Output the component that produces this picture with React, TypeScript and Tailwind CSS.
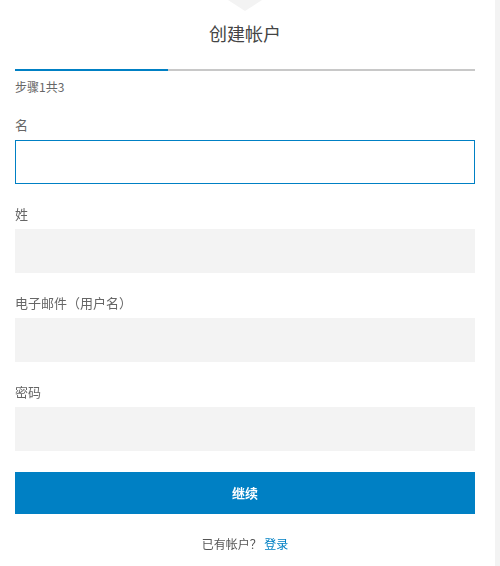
// 创建帐户 — 注册第一步
import { useState } from "react";

const fields = [
  { key: "first", label: "名", type: "text" },
  { key: "last", label: "姓", type: "text" },
  { key: "email", label: "电子邮件（用户名）", type: "email" },
  { key: "password", label: "密码", type: "password" },
];

export default function App() {
  const [focused, setFocused] = useState("first");

  return (
    <div
      className="flex min-h-[566px] w-[500px] bg-white"
      style={{ fontFamily: '"Noto Sans CJK SC", "Noto Sans", sans-serif' }}
    >
      <div className="w-[495px] pl-[15px] pr-[20px]">
        {/* 顶部小三角 */}
        <div className="flex justify-center">
          <div className="h-0 w-0 border-x-[17px] border-t-[11px] border-x-transparent border-t-[#f3f3f3]" />
        </div>

        <h1 className="mt-[10px] text-center text-[18px] leading-[24px] text-[#444]">创建帐户</h1>

        <div className="mt-[24px] flex h-[2px]">
          <div className="w-1/3 bg-[#0080c4]" />
          <div className="flex-1 bg-[#c8c8c8]" />
        </div>
        <p className="mt-[7px] text-[12px] leading-[18px] text-[#666]">步骤1共3</p>

        <div className="mt-[19px]">
          {fields.map((f, i) => (
            <div key={f.key} className={i > 0 ? "mt-[20px]" : ""}>
              <label className="block text-[13px] leading-[20px] text-[#666]">{f.label}</label>
              <input
                type={f.type}
                autoFocus={f.key === "first"}
                onFocus={() => setFocused(f.key)}
                className={`mt-[5px] block h-[44px] w-full px-3 text-[14px] outline-none ${
                  focused === f.key
                    ? "border border-[#0080c4] bg-white"
                    : "border border-transparent bg-[#f3f3f3]"
                }`}
              />
            </div>
          ))}
        </div>

        <button className="mt-[21px] flex h-[42px] w-full items-center justify-center bg-[#0080c4] text-[13px] font-bold text-white">
          继续
        </button>

        <p className="mt-[21px] text-center text-[12px] leading-[18px] text-[#555]">
          已有帐户？ <a className="text-[#0080c4]">登录</a>
        </p>
      </div>
      <div className="w-[5px] bg-[#f3f3f3]" />
    </div>
  );
}
